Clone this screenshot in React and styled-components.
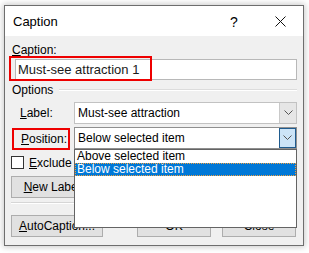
import React from "react";
import styled, { createGlobalStyle, css } from "styled-components";

const Global = createGlobalStyle`
  html, body { margin: 0; padding: 0; background: #ffffff; }
  body {
    width: 309px; height: 253px; overflow: hidden;
    font-family: "Liberation Sans", Arial, sans-serif;
    font-size: 12px; color: #000;
  }
  #root { padding: 5px 6px 0 4px; }
`;

const Window = styled.div`
  width: 298px;
  height: 239px;
  border: 1px solid #6e6e6e;
  background: #f0f0f0;
  box-shadow: 0 0 6px 1px rgba(0, 0, 0, 0.22);
  display: flex;
  flex-direction: column;
`;

const TitleBar = styled.div`
  height: 30px;
  background: #fff;
  display: flex;
  align-items: center;
  padding-left: 8px;
`;

const Title = styled.div`
  flex: 1;
  font-size: 13px;
  padding-top: 1px;
`;

const TitleButton = styled.div`
  width: 46px;
  height: 30px;
  display: flex;
  align-items: center;
  justify-content: center;
  font-size: 14px;
  padding-top: 1px;
`;

const Body = styled.div`
  flex: 1;
  padding: 7px 6px 0 6px;
  display: flex;
  flex-direction: column;
`;

const FieldLabel = styled.div`
  line-height: 15px;
  padding-left: 1px;
`;

const CaptionField = styled.div`
  position: relative;
  margin-top: 1px;
  padding-left: 4px;
`;

const TextInput = styled.div`
  height: 19px;
  border: 1px solid #b8b8b8;
  background: #fff;
  font-size: 13px;
  line-height: 19px;
  padding-left: 2px;
  color: #1a1a1a;
`;

const Annotation = styled.div`
  position: absolute;
  border: 2px solid #ee0000;
  pointer-events: none;
  ${(p) => css`
    left: ${p.$left}px; top: ${p.$top}px; width: ${p.$w}px; height: ${p.$h}px;
  `}
`;

const GroupHeader = styled.div`
  display: flex;
  align-items: center;
  gap: 6px;
  margin-top: 3px;
  line-height: 14px;
  padding-left: 1px;
`;

const Rule = styled.div`
  flex: 1;
  height: 1px;
  background: #dcdcdc;
  border-bottom: 1px solid #fff;
  margin-top: -1px;
`;

const OptionRows = styled.div`
  display: flex;
  flex-direction: column;
  gap: 3px;
  margin-top: 5px;
`;

const OptionRow = styled.div`
  display: flex;
  align-items: center;
  height: 22px;
`;

const RowLabel = styled.div`
  width: 63px;
  box-sizing: border-box;
  padding-left: 9px;
  line-height: 18px;
  ${(p) =>
    p.$marked &&
    css`
      width: 58px;
      margin-left: 1px;
      margin-right: 4px;
      margin-top: 2px;
      border: 2px solid #ee0000;
      padding-left: 7px;
    `}
`;

const Combo = styled.div`
  position: relative;
  flex: 1;
  height: 22px;
  box-sizing: border-box;
  border: 1px solid ${(p) => (p.$focused ? "#8f8f8f" : "#c2c2c2")};
  background: #fff;
  display: flex;
  align-items: center;
`;

const ComboText = styled.div`
  flex: 1;
  padding-left: 3px;
  line-height: 20px;
`;

const ComboButton = styled.div`
  width: 17px;
  height: 20px;
  box-sizing: border-box;
  display: flex;
  align-items: center;
  justify-content: center;
  ${(p) =>
    p.$focused
      ? css`
          background: #cce4f7;
          border: 1px solid #1f5b8e;
        `
      : css`
          background: #e6e6e6;
          border-left: 1px solid #c9c9c9;
        `}
`;

const DropList = styled.div`
  position: absolute;
  top: 21px;
  left: -1px;
  right: -1px;
  height: 79px;
  box-sizing: border-box;
  border: 1px solid #646464;
  background: #fff;
  z-index: 5;
`;

const DropItem = styled.div`
  height: 13px;
  line-height: 13px;
  padding-left: 2px;
  box-sizing: border-box;
  ${(p) =>
    p.$selected &&
    css`
      background: #0078d7;
      color: #fff;
      outline: 1px dotted #f0a040;
      outline-offset: -1px;
    `}
`;

const CheckRow = styled.div`
  display: flex;
  align-items: center;
  gap: 5px;
  margin-top: 6px;
  height: 15px;
`;

const CheckBox = styled.div`
  width: 13px;
  height: 13px;
  box-sizing: border-box;
  border: 1px solid #333;
  background: #fff;
`;

const ButtonRow = styled.div`
  display: flex;
  justify-content: space-between;
  margin-top: 6px;
`;

const Button = styled.div`
  width: ${(p) => p.$w || 74}px;
  height: 22px;
  box-sizing: border-box;
  border: 1px solid #adadad;
  background: #e1e1e1;
  display: flex;
  align-items: center;
  justify-content: center;
  white-space: nowrap;
  overflow: hidden;
`;

const Separator = styled.div`
  height: 1px;
  background: #d6d6d6;
  border-bottom: 1px solid #fff;
  margin-top: 4px;
`;

const Footer = styled.div`
  display: flex;
  gap: 11px;
  margin-top: 11px;
  padding-right: 1px;
`;

const Spacer = styled.div`
  flex: 1;
`;

const Chevron = () => (
  <svg width="9" height="6" viewBox="0 0 9 6">
    <polyline points="0.5,0.5 4.5,4.5 8.5,0.5" fill="none" stroke="#555" strokeWidth="1" />
  </svg>
);

const CloseIcon = () => (
  <svg width="11" height="11" viewBox="0 0 11 11">
    <path d="M0.5 0.5 L10.5 10.5 M10.5 0.5 L0.5 10.5" stroke="#111" strokeWidth="1" />
  </svg>
);

export default function App() {
  return (
    <>
      <Global />
      <Window>
        <TitleBar>
          <Title>Caption</Title>
          <TitleButton>?</TitleButton>
          <TitleButton>
            <CloseIcon />
          </TitleButton>
        </TitleBar>
        <Body>
          <FieldLabel>
            <u>C</u>aption:
          </FieldLabel>
          <CaptionField>
            <TextInput>Must-see attraction 1</TextInput>
            <Annotation $left={-2} $top={-3} $w={139} $h={21} />
          </CaptionField>
          <GroupHeader>
            Options
            <Rule />
          </GroupHeader>
          <OptionRows>
            <OptionRow>
              <RowLabel>
                <u>L</u>abel:
              </RowLabel>
              <Combo>
                <ComboText>Must-see attraction</ComboText>
                <ComboButton>
                  <Chevron />
                </ComboButton>
              </Combo>
            </OptionRow>
            <OptionRow>
              <RowLabel $marked>
                <u>P</u>osition:
              </RowLabel>
              <Combo $focused>
                <ComboText>Below selected item</ComboText>
                <ComboButton $focused>
                  <Chevron />
                </ComboButton>
                <DropList>
                  <DropItem>Above selected item</DropItem>
                  <DropItem $selected>Below selected item</DropItem>
                </DropList>
              </Combo>
            </OptionRow>
          </OptionRows>
          <CheckRow>
            <CheckBox />
            <span>
              <u>E</u>xclude label from caption
            </span>
          </CheckRow>
          <ButtonRow>
            <Button $w={92}>
              <span>
                <u>N</u>ew Label...
              </span>
            </Button>
            <Button $w={92}>
              <span>
                <u>D</u>elete Label
              </span>
            </Button>
            <Button $w={92}>
              <span>
                N<u>u</u>mbering...
              </span>
            </Button>
          </ButtonRow>
          <Separator />
          <Footer>
            <Button $w={92}>
              <span>
                <u>A</u>utoCaption...
              </span>
            </Button>
            <Spacer />
            <Button>OK</Button>
            <Button>Close</Button>
          </Footer>
        </Body>
      </Window>
    </>
  );
}
